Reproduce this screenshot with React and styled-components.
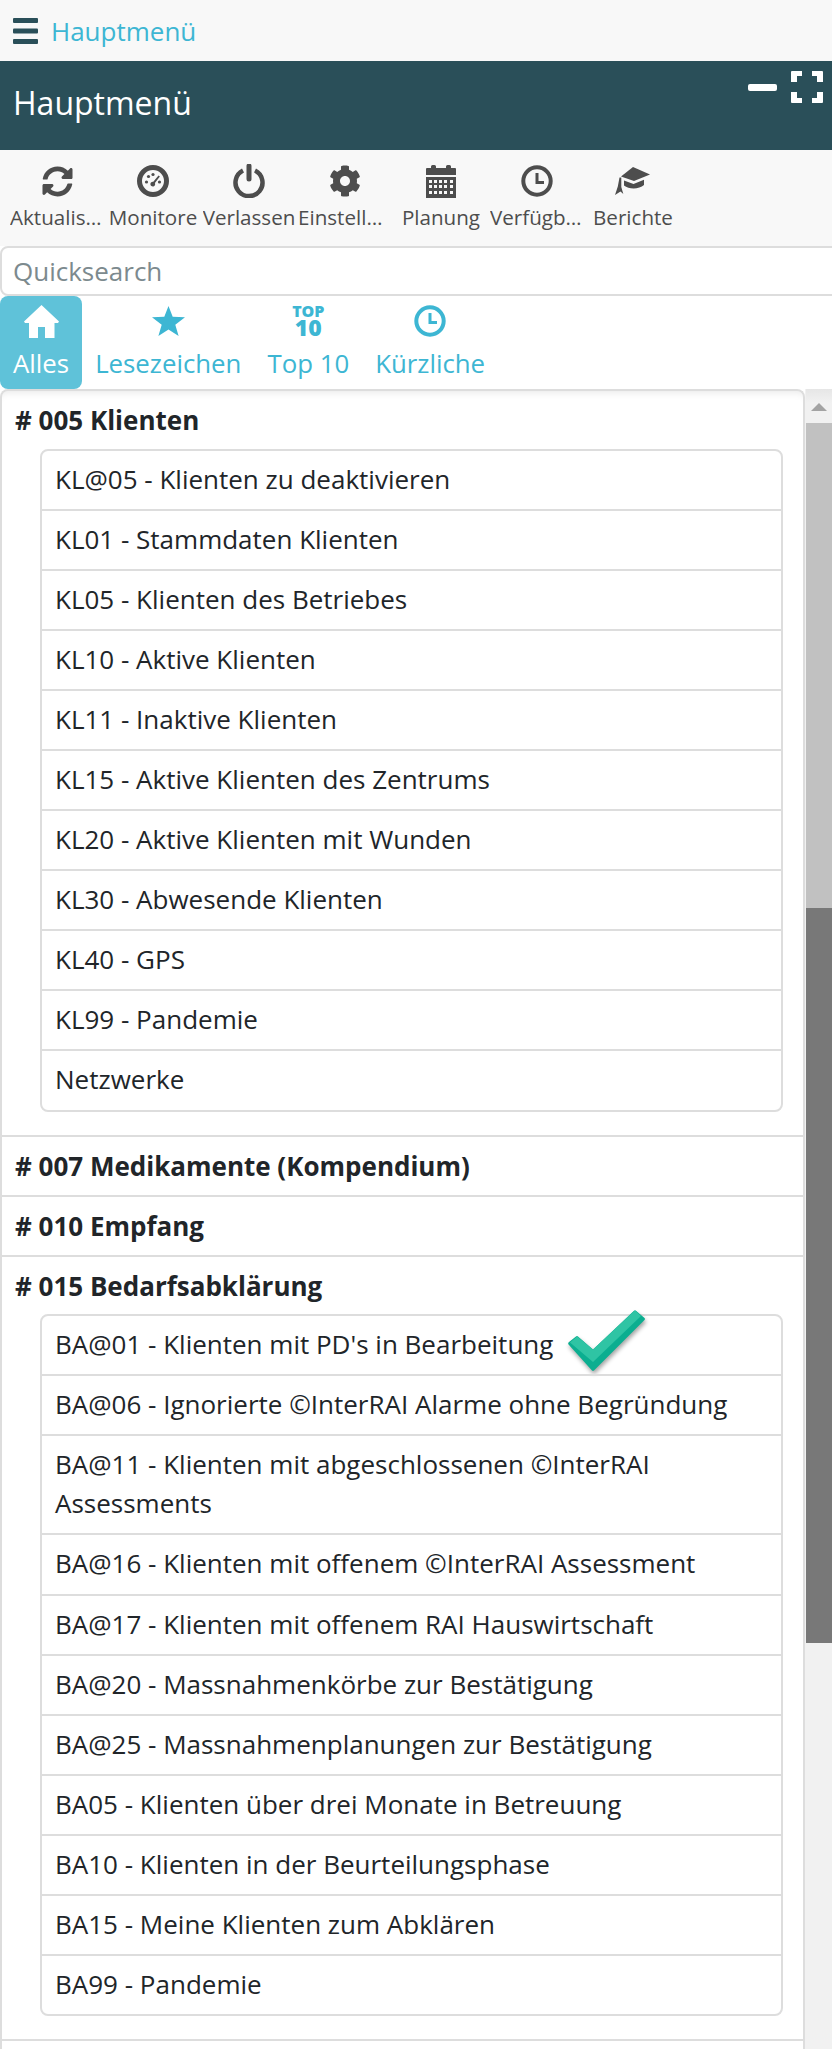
import styled, { createGlobalStyle } from 'styled-components';
import { FaCog, FaSyncAlt } from 'react-icons/fa';

const Global = createGlobalStyle`
    html, body {
        margin: 0;
        padding: 0;
        height: 2049px;
        overflow: hidden;
        background: #fff;
    }
    * { box-sizing: border-box; }
    body {
        font-family: "Open Sans", "Liberation Sans", sans-serif;
        color: #212529;
    }
`;

const Page = styled.div`
    width: 832px;
    height: 2049px;
    display: flex;
    flex-direction: column;
    overflow: hidden;
`;

const TopNav = styled.div`
    height: 61px;
    flex: none;
    background: #f8f8f8;
    display: flex;
    align-items: center;
    padding-left: 13px;
    gap: 13px;
`;

const NavTitle = styled.a`
    color: #3db6d3;
    font-size: 26px;
`;

const Header = styled.div`
    height: 89px;
    flex: none;
    background: #2a4f59;
    color: #fff;
    display: flex;
    justify-content: space-between;
    padding: 10px 9px 0 13px;
`;

const HeaderTitle = styled.h1`
    margin: 9px 0 0;
    font-size: 32px;
    font-weight: 400;
    line-height: 46px;
`;

const HeaderButtons = styled.div`
    display: flex;
    gap: 14px;
    height: 32px;
    align-items: center;
`;

const Toolbar = styled.div`
    height: 96px;
    flex: none;
    background: #f8f8f8;
    display: flex;
    padding: 14px 0 0 9px;
`;

const ToolButton = styled.div`
    width: 96px;
    flex: none;
    display: flex;
    flex-direction: column;
    align-items: center;
    color: #4d4d4d;
`;

const ToolIcon = styled.div`
    height: 34px;
    display: flex;
    align-items: center;
    justify-content: center;
`;

const ToolLabel = styled.span`
    max-width: 94px;
    margin-top: 5px;
    font-size: 20.6px;
    line-height: 28px;
    white-space: nowrap;
    overflow: hidden;
    text-overflow: ellipsis;
`;

const Search = styled.input`
    flex: none;
    width: 850px;
    height: 50px;
    border: 2px solid #ddd;
    border-radius: 8px;
    padding: 0 11px;
    font-family: inherit;
    font-size: 26px;
    color: #212529;
    background: #fff;
    outline: none;
    &::placeholder {
        color: #7c8a8e;
        opacity: 1;
    }
`;

const Tabs = styled.div`
    height: 93px;
    flex: none;
    display: flex;
    background: #fff;
`;

const Tab = styled.div`
    height: 93px;
    padding: 6px 13px 0;
    display: flex;
    flex-direction: column;
    align-items: center;
    border-radius: 8px;
    color: ${({ $active }) => ($active ? '#fff' : '#3db6d3')};
    background: ${({ $active }) => ($active ? '#5fc2d9' : 'transparent')};
`;

const TabIcon = styled.div`
    height: 38px;
    display: flex;
    align-items: center;
    justify-content: center;
`;

const TabLabel = styled.span`
    margin-top: 5px;
    font-size: 25.8px;
    line-height: 36px;
    white-space: nowrap;
`;

const TopTen = styled.div`
    display: flex;
    flex-direction: column;
    align-items: center;
    font-weight: 800;
    line-height: 1;
`;

const TopWord = styled.span`
    font-size: 16px;
    line-height: 13px;
`;

const TenWord = styled.span`
    font-size: 23px;
    line-height: 19px;
`;

const Content = styled.div`
    flex: 1;
    min-height: 0;
    display: flex;
`;

const Panel = styled.div`
    width: 805px;
    flex: none;
    border: 2px solid #ddd;
    border-bottom: 0;
    border-radius: 8px 8px 0 0;
    background: #fff;
    box-shadow: inset 0 10px 10px -10px rgba(0, 0, 0, 0.12);
    overflow: hidden;
`;

const Section = styled.section`
    border-bottom: 2px solid #ddd;
    padding-bottom: ${({ $open }) => ($open ? '23px' : '0')};
`;

const SectionTitle = styled.h2`
    margin: 0;
    height: ${({ $open }) => ($open ? '57.5px' : '58px')};
    padding-left: 13px;
    font-size: 26px;
    font-weight: 700;
    line-height: 58px;
`;

const List = styled.ul`
    list-style: none;
    margin: 0 20px 0 38px;
    padding: 0;
    border: 2px solid #ddd;
    border-radius: 8px;
`;

const Row = styled.li`
    position: relative;
    padding: 9px 13px 10px;
    font-size: 26px;
    line-height: 39.1px;
    border-top: ${({ $first }) => ($first ? '0' : '2px solid #ddd')};
`;

const Check = styled.svg`
    position: absolute;
    left: 526px;
    top: -6px;
    filter: drop-shadow(1px 3px 2px rgba(0, 0, 0, 0.35));
`;

const Scrollbar = styled.div`
    flex: 1;
    display: flex;
    flex-direction: column;
    background: #f1f1f1;
    padding-left: 1px;
`;

const ScrollUp = styled.div`
    height: 34px;
    flex: none;
    display: flex;
    justify-content: center;
    padding-top: 14px;
    background: linear-gradient(#e6e6e6, #f1f1f1 40%);
`;

const Arrow = styled.div`
    width: 0;
    height: 0;
    border-left: 8px solid transparent;
    border-right: 8px solid transparent;
    border-bottom: 8px solid #a3a3a3;
`;

const Thumb = styled.div`
    flex: none;
    height: ${({ $h }) => $h}px;
    background: ${({ $dark }) => ($dark ? '#787878' : '#c1c1c1')};
`;

const Bars = () => (
    <svg width="25" height="26" viewBox="0 0 25 26" fill="#2a4f59">
        <rect y="0" width="25" height="5" rx="1" />
        <rect y="10.5" width="25" height="5" rx="1" />
        <rect y="21" width="25" height="5" rx="1" />
    </svg>
);

const Minus = () => (
    <svg width="29" height="32" viewBox="0 0 29 32" fill="#fff">
        <rect y="13" width="29" height="7" rx="2" />
    </svg>
);

const Expand = () => (
    <svg width="32" height="32" viewBox="0 0 32 32" fill="#fff">
        <path d="M1 0h10v5H6v6H0V1a1 1 0 0 1 1-1zM21 0h10a1 1 0 0 1 1 1v10h-6V5h-5zM0 21h6v6h5v5H1a1 1 0 0 1-1-1zM26 21h6v10a1 1 0 0 1-1 1H21v-5h5z" />
    </svg>
);

const Gauge = () => (
    <svg width="32" height="32" viewBox="0 0 32 32" fill="currentColor">
        <path fillRule="evenodd" d="M16 0a16 16 0 1 1 0 32a16 16 0 0 1 0-32zm0 5a11 11 0 1 0 0 22a11 11 0 0 0 0-22z" />
        <circle cx="9.5" cy="17" r="1.6" />
        <circle cx="11.5" cy="11.5" r="1.6" />
        <circle cx="16" cy="9.5" r="1.6" />
        <circle cx="22.5" cy="17" r="1.6" />
        <path d="M21.5 10.5l1.4 1-5 6.5a2.4 2.4 0 1 1-1.6-1.2z" />
    </svg>
);

const Power = () => (
    <svg width="32" height="34" viewBox="0 0 32 34" fill="none" stroke="currentColor">
        <path d="M10 6.5a13.5 13.5 0 1 0 12 0" strokeWidth="4.5" />
        <path d="M16 2v13" strokeWidth="5" strokeLinecap="round" />
    </svg>
);

const Calendar = () => (
    <svg width="30" height="33" viewBox="0 0 30 33" fill="currentColor">
        <path d="M1 3h4V1.500a1.500 1.500 0 0 1 1.500-1.500h2A1.500 1.500 0 0 1 10 1.500V3h10V1.500A1.500 1.500 0 0 1 21.500 0h2A1.500 1.500 0 0 1 25 1.500V3h4a1 1 0 0 1 1 1v6H0V4a1 1 0 0 1 1-1z" />
        <path fillRule="evenodd" d="M0 12h30v21H0zM3 15v3h3v-3zM8 15v3h3v-3zM13 15v3h3v-3zM18 15v3h3v-3zM24 15v3h3v-3zM3 20v3h3v-3zM8 20v3h3v-3zM13 20v3h3v-3zM18 20v3h3v-3zM24 20v3h3v-3zM3 26v3h3v-3zM8 26v3h3v-3zM13 26v3h3v-3zM18 26v3h3v-3zM24 26v3h3v-3z" />
    </svg>
);

const Clock = () => (
    <svg width="32" height="32" viewBox="0 0 32 32" fill="none" stroke="currentColor">
        <circle cx="16" cy="16" r="13.700" strokeWidth="4" />
        <path d="M16 8v9.500h7" strokeWidth="3" />
    </svg>
);

const Cap = () => (
    <svg width="36" height="28" viewBox="0 0 36 28" fill="currentColor">
        <path d="M18 0L35 7.500 19 14 6 9.500z" />
        <path d="M9 13.500l9.500 3.500L29 12.800v5.200C24 22.500 14 22.500 9 18.500z" />
        <path d="M4.500 10.500h1.800v9.500l2 7-2.800-2.500L0 28l2.800-8.500z" />
    </svg>
);

const Home = () => (
    <svg width="35" height="33" viewBox="0 0 35 33" fill="currentColor">
        <path d="M17.500 0L35 16.500l-1 1.500h-3.500v15H21V22h-7v11H5V18H1l-1-1.500z" />
    </svg>
);

const Star = () => (
    <svg width="33" height="30" viewBox="0 0 33 30" fill="currentColor">
        <path d="M16.500 0l4.200 10.800 12.300.5-9.700 7.500L26.600 30l-10.100-6.600L6.400 30l3.300-11.200L0 11.300l12.300-.5z" />
    </svg>
);

const CheckMark = () => (
    <Check width="77" height="61" viewBox="0 0 77 61">
        <path d="M1 32L8 26.500a1.500 1.500 0 0 1 2 0L25 39.500 66 .7a1.500 1.500 0 0 1 2 0L76.500 8a1.500 1.500 0 0 1 0 2L26 60.500a1.500 1.500 0 0 1-2 0L1 35a2 2 0 0 1 0-3z" fill="#0bae90" />
        <path d="M2 32.500L8.500 27a1 1 0 0 1 1.300 0L25 39.500 66.300 1a1 1 0 0 1 1.400 0L73 6 25 52z" fill="#2fc4a4" />
    </Check>
);

const tools = [
    { label: 'Aktualisieren', icon: <FaSyncAlt size={31} /> },
    { label: 'Monitore', icon: <Gauge /> },
    { label: 'Verlassen', icon: <Power /> },
    { label: 'Einstellungen', icon: <FaCog size={32} /> },
    { label: 'Planung', icon: <Calendar /> },
    { label: 'Verfügbarkeit', icon: <Clock /> },
    { label: 'Berichte', icon: <Cap /> },
];

const tabs = [
    { label: 'Alles', icon: <Home />, active: true },
    { label: 'Lesezeichen', icon: <Star /> },
    { label: 'Top 10', icon: <TopTen><TopWord>TOP</TopWord><TenWord>10</TenWord></TopTen> },
    { label: 'Kürzliche', icon: <Clock /> },
];

const sections = [
    {
        title: '# 005 Klienten',
        items: [
            'KL@05 - Klienten zu deaktivieren',
            'KL01 - Stammdaten Klienten',
            'KL05 - Klienten des Betriebes',
            'KL10 - Aktive Klienten',
            'KL11 - Inaktive Klienten',
            'KL15 - Aktive Klienten des Zentrums',
            'KL20 - Aktive Klienten mit Wunden',
            'KL30 - Abwesende Klienten',
            'KL40 - GPS',
            'KL99 - Pandemie',
            'Netzwerke',
        ],
    },
    { title: '# 007 Medikamente (Kompendium)' },
    { title: '# 010 Empfang' },
    {
        title: '# 015 Bedarfsabklärung',
        items: [
            "BA@01 - Klienten mit PD's in Bearbeitung",
            'BA@06 - Ignorierte ©InterRAI Alarme ohne Begründung',
            'BA@11 - Klienten mit abgeschlossenen ©InterRAI Assessments',
            'BA@16 - Klienten mit offenem ©InterRAI Assessment',
            'BA@17 - Klienten mit offenem RAI Hauswirtschaft',
            'BA@20 - Massnahmenkörbe zur Bestätigung',
            'BA@25 - Massnahmenplanungen zur Bestätigung',
            'BA05 - Klienten über drei Monate in Betreuung',
            'BA10 - Klienten in der Beurteilungsphase',
            'BA15 - Meine Klienten zum Abklären',
            'BA99 - Pandemie',
        ],
    },
];

const App = () => {
    return (
        <Page>
            <Global />
            <TopNav>
                <Bars />
                <NavTitle>Hauptmenü</NavTitle>
            </TopNav>
            <Header>
                <HeaderTitle>Hauptmenü</HeaderTitle>
                <HeaderButtons>
                    <Minus />
                    <Expand />
                </HeaderButtons>
            </Header>
            <Toolbar>
                {tools.map((tool) => (
                    <ToolButton key={tool.label}>
                        <ToolIcon>{tool.icon}</ToolIcon>
                        <ToolLabel>{tool.label}</ToolLabel>
                    </ToolButton>
                ))}
            </Toolbar>
            <Search placeholder="Quicksearch" />
            <Tabs>
                {tabs.map((tab) => (
                    <Tab key={tab.label} $active={tab.active}>
                        <TabIcon>{tab.icon}</TabIcon>
                        <TabLabel>{tab.label}</TabLabel>
                    </Tab>
                ))}
            </Tabs>
            <Content>
                <Panel>
                    {sections.map((section) => (
                        <Section key={section.title} $open={!!section.items}>
                            <SectionTitle $open={!!section.items}>{section.title}</SectionTitle>
                            {section.items && (
                                <List>
                                    {section.items.map((item, index) => (
                                        <Row key={item} $first={index === 0}>
                                            {item}
                                            {item.startsWith('BA@01') && <CheckMark />}
                                        </Row>
                                    ))}
                                </List>
                            )}
                        </Section>
                    ))}
                </Panel>
                <Scrollbar>
                    <ScrollUp><Arrow /></ScrollUp>
                    <Thumb $h={485} />
                    <Thumb $h={735} $dark />
                </Scrollbar>
            </Content>
        </Page>
    );
};

export default App;
